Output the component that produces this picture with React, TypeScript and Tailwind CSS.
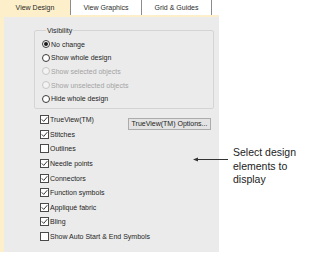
import React from "react";

const Radio = ({
  label,
  checked,
  disabled,
}: {
  label: string;
  checked?: boolean;
  disabled?: boolean;
}) => (
  <div className="flex h-[13.6px] items-center gap-[1px]">
    <span
      className={`flex h-[8px] w-[8px] items-center justify-center rounded-full border ${
        disabled ? "border-[#c6c6c6] bg-[#f3f3f3]" : "border-[#3a3a3a] bg-white"
      }`}
    >
      {checked && <span className="h-[4px] w-[4px] rounded-full bg-[#1a1a1a]" />}
    </span>
    <span className={disabled ? "text-[#a3a3a3]" : "text-[#1e1e1e]"}>{label}</span>
  </div>
);

const Check = ({ checked }: { checked?: boolean }) => (
  <span className="flex h-[9px] w-[9px] shrink-0 items-center justify-center border border-[#4a4a4a] bg-white">
    {checked && (
      <svg width="7" height="7" viewBox="0 0 7 7">
        <path d="M0.8 3.4 L2.7 5.4 L6.3 1.2" fill="none" stroke="#222" strokeWidth="0.9" />
      </svg>
    )}
  </span>
);

const options = [
  { label: "Stitches", checked: true },
  { label: "Outlines", checked: false },
  { label: "Needle points", checked: true },
  { label: "Connectors", checked: true },
  { label: "Function symbols", checked: true },
  { label: "Appliqué fabric", checked: true },
  { label: "Bling", checked: true },
  { label: "Show Auto Start & End Symbols", checked: false },
];

export default function App() {
  return (
    <div className="relative h-[268px] w-[321px] overflow-hidden bg-white font-['Liberation_Sans',Arial,sans-serif] text-[7px] leading-[9px] text-[#1e1e1e]">
      <div className="flex h-[252px] w-[219px] flex-col">
        {/* Tabs */}
        <div className="flex h-[15px] shrink-0 text-[#2a2a2a]">
          <div className="flex w-[70px] items-center justify-center bg-[#fcefc9]">View Design</div>
          <div className="flex w-[71px] items-center justify-center border-l border-[#8c8c8c] bg-white">
            View Graphics
          </div>
          <div className="flex w-[71px] items-center justify-center border-x border-[#8c8c8c] bg-white">
            Grid &amp; Guides
          </div>
        </div>

        {/* Panel */}
        <div className="flex-1 border-l-[4px] border-t-[2px] border-[#fcefc9] bg-[#ebebeb]">
          <fieldset className="ml-[30px] mt-[9px] w-[180px] rounded-[2px] border border-[#d4d4d4] pb-[3px] pl-[7px] pt-[2.5px]">
            <legend className="ml-[4px] px-[1px] text-[#1e1e1e]">Visibility</legend>
            <Radio label="No change" checked />
            <Radio label="Show whole design" />
            <Radio label="Show selected objects" disabled />
            <Radio label="Show unselected objects" disabled />
            <Radio label="Hide whole design" />
          </fieldset>

          <div className="ml-[36px] mt-[3px] flex w-[171px] flex-col">
            <div className="flex h-[14.6px] items-center gap-[1px]">
              <Check checked />
              <span>TrueView(TM)</span>
              <button className="ml-auto mt-[8px] flex h-[12px] w-[83px] items-center justify-center border border-[#acacac] bg-[#e3e3e3] text-[#222]">
                TrueView(TM) Options...
              </button>
            </div>
            {options.map((o) => (
              <div key={o.label} className="flex h-[14.6px] items-center gap-[1px]">
                <Check checked={o.checked} />
                <span>{o.label}</span>
              </div>
            ))}
          </div>
        </div>
      </div>

      {/* Callout */}
      <div className="absolute left-[192px] top-[146px] flex">
        <svg width="41" height="27" viewBox="0 0 41 27">
          <line x1="4" y1="13.5" x2="36" y2="13.5" stroke="#333" strokeWidth="1" />
          <polygon points="1,13.5 6,11.6 6,15.4" fill="#333" />
        </svg>
        <div className="text-[10.5px] leading-[13.5px] text-[#222]">
          Select design
          <br />
          elements to
          <br />
          display
        </div>
      </div>
    </div>
  );
}
